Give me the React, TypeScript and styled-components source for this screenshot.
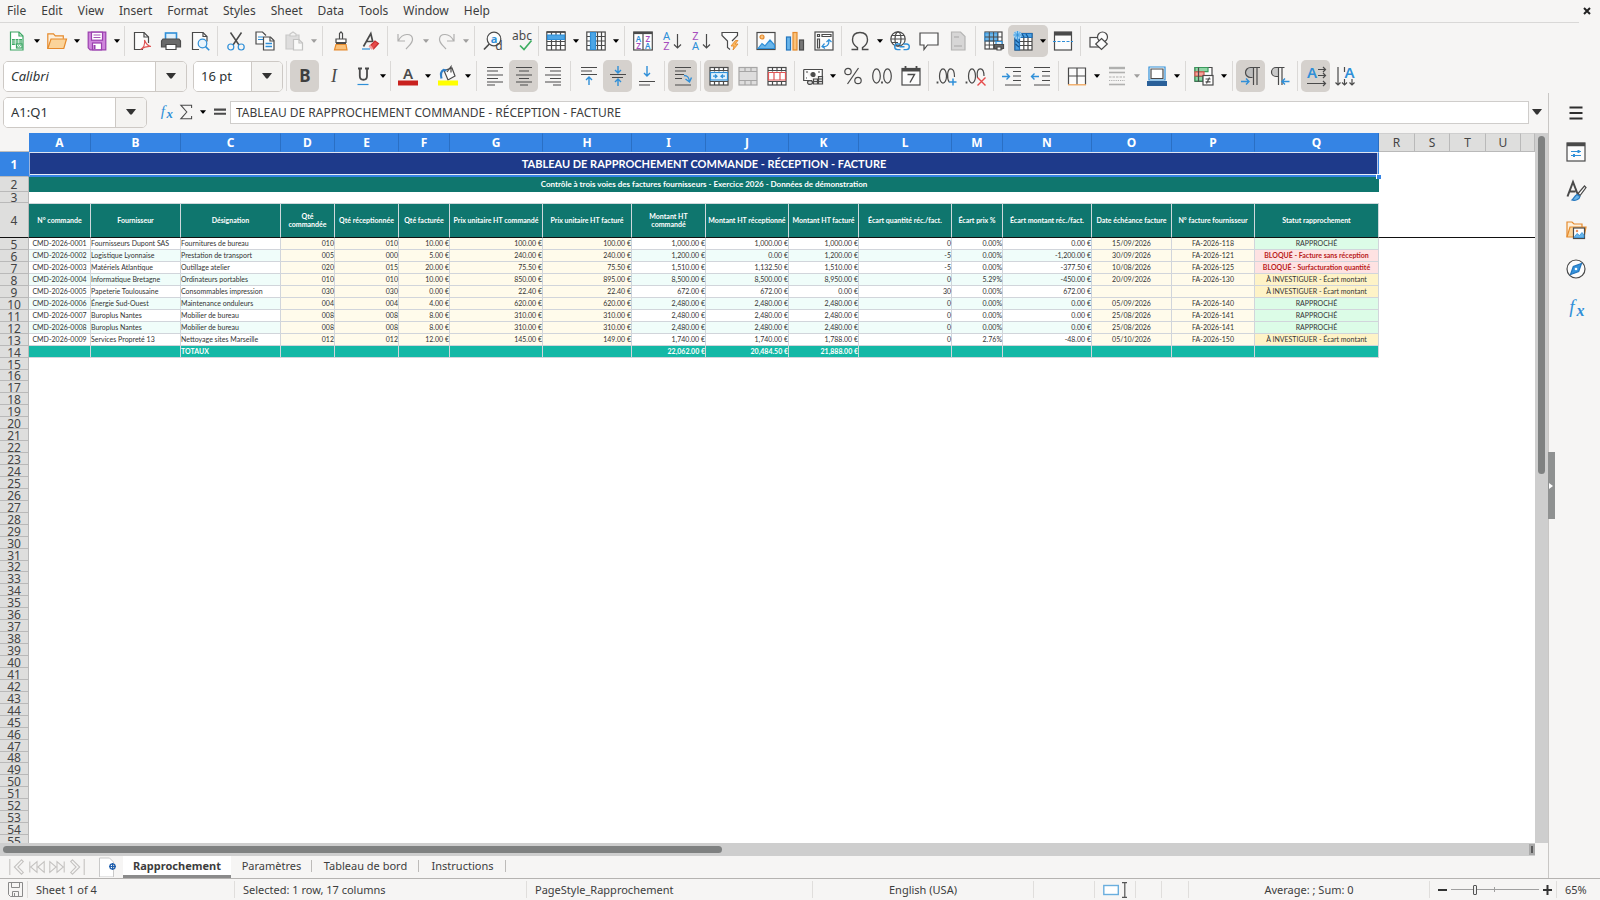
import React from "react";
import styled, { createGlobalStyle, css } from "styled-components";

const UI = `"Noto Sans", "Open Sans", sans-serif`;
const CELL = `Lato, "Open Sans", sans-serif`;
const INK = "#4a4a4a";
const BLUE = "#2f8fd8";

const GlobalStyle = createGlobalStyle`
  *, *::before, *::after { box-sizing: border-box; }
  html, body, #root { height: 100%; }
  body { margin: 0; background: #f6f5f4; color: #3d3d3d; font-family: ${UI}; font-size: 13px; overflow: hidden; }
  button, input { font: inherit; color: inherit; }
  button { border: 0; background: none; padding: 0; margin: 0; }
`;

/* ---------- shell ---------- */
const Shell = styled.div`
  display: flex;
  flex-direction: column;
  height: 100%;
`;
const MenuBar = styled.nav`
  display: flex;
  align-items: center;
  height: 23px;
  flex: none;
  padding: 0 0 0 7px;
  gap: 15px;
  font-size: 12px;
  margin-right: 21px;
  border-bottom: 1px solid #d9d8d7;
`;
const MenuItem = styled.button`
  line-height: 20px;
`;
const CloseButton = styled.button`
  margin: 0 -12px 0 auto;
  display: flex;
`;
const Toolbar = styled.div<{ $pad?: number; $h?: number }>`
  display: flex;
  align-items: center;
  height: ${(p) => p.$h ?? 36}px;
  flex: none;
  padding-left: ${(p) => p.$pad ?? 2}px;
`;
const Separator = styled.span<{ $tight?: boolean }>`
  width: ${(p) => (p.$tight ? 5 : 7)}px;
  height: 30px;
  flex: none;
  display: flex;
  justify-content: center;
  &::after { content: ""; width: 1px; background: #dbd9d7; }
`;
const ToolButton = styled.button<{ $active?: boolean; $off?: boolean }>`
  width: 29px;
  height: 32px;
  flex: none;
  display: flex;
  align-items: center;
  justify-content: center;
  border-radius: 5px;
  opacity: ${(p) => (p.$off ? 0.4 : 1)};
  background: ${(p) => (p.$active ? "#d5d1cd" : "transparent")};
`;
const ArrowButton = styled.button<{ $off?: boolean }>`
  width: 11px;
  height: 32px;
  flex: none;
  display: flex;
  align-items: center;
  justify-content: center;
  opacity: ${(p) => (p.$off ? 0.35 : 1)};
`;
const SplitGroup = styled.span<{ $active?: boolean }>`
  display: flex;
  border-radius: 5px;
  background: ${(p) => (p.$active ? "#d5d1cd" : "transparent")};
`;
const Combo = styled.div<{ $width: number }>`
  display: flex;
  width: ${(p) => p.$width}px;
  height: 31px;
  flex: none;
  border: 1px solid #cdc9c5;
  border-radius: 5px;
  overflow: hidden;
  background: #fff;
`;
const ComboInput = styled.input<{ $italic?: boolean }>`
  flex: 1;
  min-width: 0;
  border: 0;
  outline: 0;
  padding: 0 7px;
  color: #2e3436;
  font-style: ${(p) => (p.$italic ? "italic" : "normal")};
`;
const ComboArrow = styled.button`
  width: 31px;
  display: flex;
  align-items: center;
  justify-content: center;
  border-left: 1px solid #cdc9c5;
  background: #f4f3f1;
`;
const ComboGap = styled.span`
  width: 6px;
  flex: none;
`;

/* ---------- body ---------- */
const Body = styled.div`
  display: flex;
  flex: 1;
  min-height: 0;
`;
const Main = styled.main`
  flex: 1;
  min-width: 0;
  display: flex;
  flex-direction: column;
`;
const FormulaBar = styled.div`
  display: flex;
  align-items: center;
  height: 38px;
  flex: none;
  padding: 0 6px 0 3px;
  margin-bottom: 2px;
`;
const FormulaTools = styled.div`
  display: flex;
  align-items: center;
  padding-left: 9px;
`;
const FormulaButton = styled.button<{ $w: number }>`
  width: ${(p) => p.$w}px;
  height: 24px;
  display: flex;
  align-items: center;
  justify-content: center;
`;
const FormulaInput = styled.input`
  flex: 1;
  min-width: 0;
  height: 23px;
  padding: 0 5px;
  margin: 0 3px 0 1px;
  border: 1px solid #cfcdcb;
  outline: 0;
  background: #fff;
  font-size: 12px;
`;
const SheetArea = styled.div`
  display: flex;
  flex: 1;
  min-height: 0;
`;
const SheetViewport = styled.div`
  flex: 1;
  min-width: 0;
  overflow: hidden;
  background: #fff;
`;
const VScroll = styled.div`
  width: 13px;
  flex: none;
  background: #cecece;
  padding: 3px;
`;
const VThumb = styled.div`
  height: 48%;
  border-radius: 4px;
  background: #7f8181;
`;
const HScroll = styled.div`
  height: 13px;
  flex: none;
  margin-right: 13px;
  background: #cecece;
  padding: 3px 2px 3px 3px;
  display: flex;
  justify-content: space-between;
`;
const HThumb = styled.div`
  width: 47%;
  border-radius: 4px;
  background: #7f8181;
`;
const HGrip = styled.div`
  width: 2px;
  background: #5c5c5c;
  box-shadow: 0 0 0 2px #a9a9a9;
`;

/* ---------- sheet table ---------- */
const Sheet = styled.table`
  width: 100%;
  table-layout: fixed;
  border-collapse: separate;
  border-spacing: 0;
  font-family: ${CELL};
  font-size: 7px;
  color: #333;
`;
const Corner = styled.td`
  padding: 0;
  background: #f6f5f4;
  border-bottom: 1px solid #bdbdbd;
`;
const ColHead = styled.th<{ $sel: boolean }>`
  height: 19px;
  padding: 0;
  font: ${(p) => (p.$sel ? 700 : 400)} 12px/16px ${UI};
  color: ${(p) => (p.$sel ? "#fff" : "#444")};
  background: ${(p) => (p.$sel ? "#3584e4" : "#dededd")};
  border-right: 1px solid ${(p) => (p.$sel ? "#2a6fc4" : "#b9b9b9")};
  border-bottom: 1px solid ${(p) => (p.$sel ? "#3584e4" : "#b9b9b9")};
  border-top: 1px solid ${(p) => (p.$sel ? "#3584e4" : "#cfcfcf")};
`;
const RowHead = styled.th<{ $sel?: boolean; $h: number; $line?: boolean }>`
  height: ${(p) => p.$h}px;
  padding: ${(p) => (p.$h < 20 ? "1px" : 0)} 0 0;
  overflow: hidden;
  font: ${(p) => (p.$sel ? 700 : 400)} 12px/9px ${UI};
  color: ${(p) => (p.$sel ? "#fff" : "#444")};
  background: ${(p) => (p.$sel ? "#3584e4" : "#dededd")};
  border-right: 1px solid ${(p) => (p.$sel ? "#3584e4" : "#b9b9b9")};
  border-bottom: 1px solid ${(p) => (p.$line ? "#111" : "#b9b9b9")};
`;
const band = css`
  padding: 0;
  text-align: center;
  font-weight: 700;
  color: #fff;
`;
const TitleCell = styled.td`
  ${band}
  background: #1e3a8a;
  font-size: 11px;
  line-height: 16px;
  border: 1px solid #3584e4;
  border-top-color: #dfe5f2;
  border-left-color: #9db4dc;
  border-bottom: 2px solid #3584e4;
  box-shadow: inset 0 -1px #e9eef8, inset -1px 0 #b8c5e4;
  position: relative;
`;
const FillHandle = styled.span`
  position: absolute;
  right: -3px;
  bottom: -4px;
  width: 5px;
  height: 5px;
  background: #3584e4;
  border: solid #fff;
  border-width: 1px 0 0 1px;
`;
const SubtitleCell = styled.td`
  ${band}
  padding-bottom: 2px;
  background: #0f766e;
  font-size: 8px;
  line-height: 10px;
`;
const HeadCell = styled.th`
  ${band}
  padding-bottom: 2px;
  white-space: nowrap;
  background: #0f766e;
  line-height: 8px;
  border-right: 1px solid #cfd8dc;
  border-top: 1px solid #cfd8dc;
  border-bottom: 1px solid #111;
`;
const FreezeCell = styled.td`
  padding: 0;
  border-bottom: 1px solid #111;
`;
const BlankCell = styled.td`
  padding: 0;
`;
const DataCell = styled.td<{ $bg: string; $align: string }>`
  padding: 0 0 1px;
  white-space: nowrap;
  line-height: 9px;
  text-align: ${(p) => p.$align};
  background: ${(p) => p.$bg};
  border-right: 1px solid #d1d5db;
  border-bottom: 1px solid #d1d5db;
`;
const StatusCell = styled(DataCell)<{ $blocked: boolean }>`
  ${(p) => p.$blocked && css`
    font-weight: 700;
    color: #b91c1c;
  `}
`;
const TotalCell = styled(DataCell)`
  font-weight: 700;
  color: #fff;
`;

/* ---------- side bar ---------- */
const SideBar = styled.aside`
  position: relative;
  width: 52px;
  flex: none;
  border-left: 1px solid #c9c7c5;
  display: flex;
  flex-direction: column;
  align-items: center;
  padding-left: 2px;
`;
const SideButton = styled.button`
  width: 36px;
  height: 39px;
  display: flex;
  align-items: center;
  justify-content: center;
`;
const SideHandle = styled.button`
  position: absolute;
  left: -1px;
  top: 359px;
  width: 7px;
  height: 67px;
  background: #8f9191;
  display: flex;
  align-items: center;
`;

/* ---------- tabs and status ---------- */
const TabBar = styled.div`
  display: flex;
  flex: none;
  height: 22px;
`;
const TabNav = styled.div`
  display: flex;
  align-items: center;
  padding-left: 7px;
  width: 90px;
`;
const NavButton = styled.button`
  width: 20px;
  height: 20px;
  display: flex;
  align-items: center;
  justify-content: center;
`;
const AddButton = styled.button`
  width: 33px;
  display: flex;
  align-items: center;
  padding-left: 9px;
`;
const Tab = styled.button<{ $active?: boolean; $w: number }>`
  width: ${(p) => p.$w}px;
  position: relative;
  font-size: 11px;
  font-weight: ${(p) => (p.$active ? 700 : 400)};
  background: ${(p) => (p.$active ? "#fff" : "transparent")};
  border-bottom: 3px solid ${(p) => (p.$active ? "#8b8b8b" : "transparent")};
  &::after {
    content: "";
    position: absolute;
    right: 0;
    top: 4px;
    height: 12px;
    width: ${(p) => (p.$active ? 0 : 1)}px;
    background: #bdbbb9;
  }
`;
const StatusBar = styled.footer`
  display: flex;
  flex: none;
  height: 22px;
  border-top: 1px solid #b5b3b1;
  font-size: 11px;
`;
const StatusField = styled.div<{ $w?: number; $center?: boolean; $grow?: number }>`
  ${(p) => (p.$grow ? css`flex: ${p.$grow} 1 0;` : css`width: ${p.$w}px; flex: none;`)}
  display: flex;
  align-items: center;
  gap: 4px;
  justify-content: ${(p) => (p.$center ? "center" : "flex-start")};
  padding-left: ${(p) => (p.$center ? 0 : 8)}px;
  border-right: 1px solid #e0dedc;
  &:last-child { border-right: 0; }
  margin: 2px 0;
  white-space: nowrap;
`;
const ZoomButton = styled.button`
  display: flex;
`;
const ZoomRange = styled.input`
  appearance: none;
  width: 88px;
  height: 14px;
  margin: 0;
  background: linear-gradient(#a0a0a0, #a0a0a0) center / 100% 1px no-repeat,
    linear-gradient(#a0a0a0, #a0a0a0) 43px center / 1px 5px no-repeat;
  &::-webkit-slider-thumb {
    appearance: none;
    width: 4px;
    height: 10px;
    border: 1px solid #555;
    border-radius: 1px;
    background: #eee;
  }
`;

/* ---------- icons ---------- */
const Drawing = styled.svg`
  display: block;
  overflow: visible;
`;
type SvgProps = { children: React.ReactNode; size?: number };
const Svg = ({ children, size = 20 }: SvgProps) => (
  <Drawing width={size} height={size} viewBox="0 0 20 20" fill="none" stroke={INK} strokeWidth="1.2" aria-hidden="true">
    {children}
  </Drawing>
);
const Caret = ({ big }: { big?: boolean }) => (
  <svg width={big ? 10 : 6} height={big ? 6 : 4} viewBox="0 0 10 6" aria-hidden="true">
    <path d="M0 0h10L5.800 5.600h-1.600z" fill={big ? "#333" : "#000"} />
  </svg>
);
const T = (p: { x: number; y: number; s: number; c?: string; w?: number; st?: string; f?: string; children: string }) => (
  <text x={p.x} y={p.y} fontSize={p.s} fill={p.c ?? INK} stroke="none" fontWeight={p.w ?? 400} fontStyle={p.st ?? "normal"} fontFamily={p.f ?? UI} textAnchor="middle">
    {p.children}
  </text>
);

const icons: Record<string, React.ReactNode> = {
  new: <><path d="M3.500 1h8.500l4 4v14h-12.500z" fill="#fff" stroke="#3ba663" /><path d="M12 1v4h4" stroke="#3ba663" /><path d="M5 8h10v6h-10z" fill="#3ba663" stroke="none" /><path d="M5 10h10M5 12h10M8.300 8v6M11.700 8v6" stroke="#fff" strokeWidth=".7" /><rect x="9.500" y="13" width="5.500" height="4" fill="#fff" stroke="#3ba663" /><path d="M10 16.500l1.500-2 1.200 1 1.500-1.500" stroke="#3ba663" strokeWidth=".8" /></>,
  open: <><path d="M.8 17.500V2.800h5.700l1.800 2h8v3" stroke="#e58a2c" fill="#fdf0dc" /><path d="M.8 17.500L4 8h15.500l-2.700 9.500z" fill="#fbd49a" stroke="#e58a2c" /></>,
  save: <><path d="M1.200 1.200h17.600v17.600H3.200l-2-2z" fill="#cf86dc" stroke="#9a3fae" /><rect x="4.500" y="1.200" width="11" height="8" fill="#fff" stroke="#9a3fae" /><path d="M6.500 4h7M6.500 6.500h7" stroke="#9a3fae" strokeWidth=".9" /><rect x="5.500" y="12" width="9" height="6.800" fill="#fff" stroke="#9a3fae" /><path d="M7.500 14v4" stroke="#9a3fae" strokeWidth="2" /></>,
  pdf: <><path d="M11 18.500H2.500V1.500h9.500l4.500 4.500v6" fill="#fcfcfc" /><path d="M12 1.500v4.500h4.500" /><path d="M8.500 18.500c3-1.500 4.500-5.500 4-9.500 1.500 4 3 6 6.500 6.500-4-.5-7 .5-10.500 3z" stroke="#e05555" strokeWidth="1.100" /></>,
  print: <><rect x="4.500" y="2" width="11" height="8" fill="#dff0fb" stroke={BLUE} strokeWidth="1.600" /><path d="M2 8h16l1.500 2v6h-19v-6z" fill="#6a6a6a" stroke="#4d4d4d" /><path d="M5 13.500h10v5H5z" fill="#fff" /></>,
  preview: <><path d="M9 18.500H2.500V1.500h10.500l4 4v5" fill="#fcfcfc" /><path d="M13 1.500v4h4" /><circle cx="12.500" cy="12.500" r="4.300" fill="#e8f4fc" stroke={BLUE} /><path d="M15.600 15.600l3.600 3.600" stroke={BLUE} strokeWidth="1.600" /></>,
  cut: <><path d="M4.500 1.500l8.500 12.500M15.500 1.500L7 14" strokeWidth="1.500" /><circle cx="4.800" cy="16" r="3" stroke={BLUE} /><circle cx="15.200" cy="16" r="3" stroke={BLUE} /></>,
  copy: <><path d="M9 13H1V1h6.500l3.500 3.500" fill="#fcfcfc" /><path d="M3 6h5M3 8.500h5" stroke={BLUE} /><path d="M8.500 6h7L19 9.500V19H8.500z" fill="#fcfcfc" /><path d="M15 6v4h4" /><path d="M10.500 12.500h6.500M10.500 15.500h6.500" stroke={BLUE} strokeWidth="1.600" /></>,
  paste: <><path d="M2 4h13v14H2z" fill="#bbb" stroke="#888" /><path d="M6 5V3l3-2 3 2v2z" fill="#eee" stroke="#888" /><path d="M9.500 8.500h5.500l3.500 3.500v7H9.500z" fill="#fff" stroke="#777" /><path d="M15 8.500V12h3.500" stroke="#777" /></>,
  clone: <><path d="M8.500 8V2.500L10 .8l1.500 1.700V8M5 12V8h10v4" fill="#fff" /><path d="M5 12h10" strokeWidth="2" /><path d="M5 13.500l-1.500 5.300h12.500l-1-5.300z" fill="#fbc27b" stroke="#e58a2c" /></>,
  clear: <><path d="M3.500 15.500L10.800 2.500l2 8.500M6.500 10.500h6" strokeWidth="1.700" /><path d="M2 18h8" stroke={BLUE} /><path d="M10 15l5-5 3.500 2.500-5 5.500z" fill="#e64a4a" stroke="#c92f2f" /><path d="M8.500 15.500l2-1.500 3 3.500-2 1.300z" fill="#f6a0a0" stroke="none" /></>,
  undo: <path d="M2 3v7h7M2.500 9.500c4-8 13.500-7.500 14-1.500.3 4-3 6-6.500 10" />,
  redo: <path d="M18 3v7h-7M17.500 9.500C13.500 1.500 4 2 3.500 8c-.3 4 3 6 6.500 10" />,
  find: <><circle cx="11" cy="8" r="6.800" fill="#fcfcfc" /><path d="M6.300 13L1 18.500" strokeWidth="1.700" /><T x={11} y={12} s={11} c={BLUE} w={700}>a</T><T x={16} y={19} s={12}>d</T></>,
  spell: <><T x={10} y={9} s={12}>abc</T><path d="M8 14.500l4 4 7.500-9" stroke="#3fae62" strokeWidth="1.700" /></>,
  row: <><rect x=".8" y="1" width="18.400" height="18" fill="#fff" /><path d="M1 10.500h18M1 14.500h18M5.500 1v18M10 1v18M14.500 1v18" /><path d="M1.500 4h17v4.500H1.500z" fill="#4da6e6" stroke={BLUE} /><path d="M.8 1h18.400" strokeWidth="1.600" /></>,
  col: <><rect x=".8" y="1" width="18.400" height="18" fill="#fff" /><path d="M1 5.500h18M1 10h18M1 14.500h18M11.500 1v18M15.500 1v18" /><path d="M4.500 1.500h5v17h-5z" fill="#4da6e6" stroke={BLUE} /></>,
  sort: <><rect x=".7" y="1" width="18.600" height="18" fill="#fff" /><path d="M1 2h18" strokeWidth="2.200" /><path d="M10 2v17" /><T x={5.5} y={11} s={8} c={BLUE} w={600}>A</T><T x={14.7} y={11} s={8} c="#a64dbd" w={600}>Z</T><T x={5.5} y={18} s={8} c="#a64dbd" w={600}>Z</T><T x={14.7} y={18} s={8} c={BLUE} w={600}>A</T></>,
  asc: <><T x={4.5} y={9} s={11} c={BLUE}>A</T><T x={4.5} y={19} s={11} c="#a64dbd">Z</T><path d="M15.500 3v14M12 13.500l3.500 3.500 3.500-3.500" /></>,
  desc: <><T x={4.5} y={9} s={11} c="#a64dbd">Z</T><T x={4.5} y={19} s={11} c={BLUE}>A</T><path d="M15.500 3v14M12 13.500l3.500 3.500 3.500-3.500" /></>,
  filter: <><path d="M10 18.500l-2.500-2V10L2 4.500V1.500h15.500v3L12 10" fill="#fcfcfc" /><path d="M15.500 9.500L11 15h3l-1 4 5-6h-3l3-3.500z" fill="#fbb860" stroke="#e58a2c" strokeWidth=".9" /></>,
  image: <><rect x="1" y="1.500" width="18" height="17" fill="#fcfcfc" /><circle cx="6" cy="6" r="2" fill="#fbc27b" stroke="#e58a2c" /><path d="M2 17.500l4-5 3 2.500 5-6 4.500 5v3.500z" fill="#69b5ea" stroke={BLUE} /></>,
  chart: <><rect x="1.500" y="6" width="4" height="13" fill="#69b5ea" stroke="#2476bd" /><rect x="8" y="1.500" width="4" height="17.500" fill="#fbc27b" stroke="#e58a2c" /><rect x="14.500" y="9" width="4" height="10" fill="#777" /></>,
  pivot: <><rect x="1" y="1" width="18" height="18" fill="#fcfcfc" /><path d="M3.500 3.500h2v2h-2zM8 3.500h9v2H8zM3.500 8h2v9h-2z" /><path d="M9 15.500c4 .5 6-1.500 6-6M12.500 11l2.500-2.500L17.500 11M10.500 12.500l-2.500 3 3 2" stroke={BLUE} /></>,
  omega: <path d="M1.500 18.500h6v-1.800C4 14.500 2.500 12 2.500 8.800 2.500 4 5.700 1.500 10 1.500s7.500 2.500 7.500 7.300c0 3.200-1.500 5.700-5 7.900v1.800h6" strokeWidth="1.400" />,
  link: <><circle cx="8" cy="8" r="7.200" fill="#fcfcfc" /><ellipse cx="8" cy="8" rx="3" ry="7.200" /><path d="M1 8h14M2 4.500h12M2 11.500h6" /><path d="M10.500 13h-3a2.800 2.800 0 0 0 0 5.600h3M13.500 13h3a2.800 2.800 0 0 1 0 5.600h-3M9.500 15.800h5" stroke={BLUE} strokeWidth="1.400" /></>,
  comment: <path d="M1 2h18v12H8.500L5 18.500V14H1z" fill="#fcfcfc" />,
  headers: <><path d="M3.500 1h9l4.500 4.500V19H3.500z" fill="#aaa" stroke="#555" /><path d="M6 6h5M6 15h8" stroke="#333" /></>,
  printRange: <><rect x="1" y="1" width="17" height="17" fill="#fff" /><path d="M1 2h12.500v8H1z" fill="#69b5ea" stroke={BLUE} /><path d="M1 6h17M1 10h17M1 14h12M5.300 1v17M9.600 1v17M13.900 1v10" strokeWidth="1" /><path d="M12 10.500h6V14h-6z" fill="#e3f2fc" stroke={BLUE} /><path d="M10.500 13.500h9v4h-9z" fill="#666" /><path d="M13 16h4v3h-4z" fill="#fff" /></>,
  freeze: <><rect x="2" y="2.500" width="17" height="16.500" fill="#fff" /><path d="M2 2.500h17v4H6.500V19H2z" fill="#4a9fe0" stroke="#1e6fb8" /><path d="M7 10.500h12M7 14.500h12M10.800 6.500V19M15 6.500V19" /><path d="M2.500 9l3.500 3M2.500 13l3.500 3M9 3l2 3M13 3l2 3" stroke="#12508c" /><circle cx="4.500" cy="4" r="4" fill="#9bd0f5" stroke="none" /><path d="M4.500 0v8M.5 4h8M1.700 1.200l5.600 5.600M7.300 1.200L1.700 6.800" stroke={BLUE} strokeWidth=".8" /></>,
  split: <><rect x="1.500" y="1" width="17" height="18" fill="#fcfcfc" /><path d="M1.500 2.800h17" strokeWidth="3.500" /><path d="M0 10.500h20" stroke={BLUE} strokeDasharray="3 1.500" /></>,
  shapes: <><rect x="1" y="6.500" width="10" height="9.500" fill="#fcfcfc" /><circle cx="13.500" cy="6" r="5" fill="#fcfcfc" /><path d="M12.500 7.500l5.800 5.500-5.800 5.500L6.700 13z" fill="#fcfcfc" /></>,
  bold: <T x={10} y={16} s={17} w={700} c="#3f3f3f">B</T>,
  italic: <T x={10} y={16} s={18} st="italic" f='"Liberation Serif", serif'>I</T>,
  underline: <><path d="M5 2.500h4M12 2.500h4M6.800 2.500V10c0 5 7.200 5 7.200 0V2.500" strokeWidth="1.800" /><path d="M4.500 18.500h11" stroke={BLUE} /></>,
  fontColor: <><T x={10} y={12.5} s={15} w={600}>A</T><path d="M0 14.500h20v5H0z" fill="#c9211e" stroke="none" /></>,
  highlight: <><path d="M6 4.500l8-2.500 3 8-7 4z" fill="#fcfcfc" /><path d="M9 6l4-5.500v6" /><path d="M3.500 12.500c-1-4 0-7.500 2-8.500l3 .5" stroke="#2f7fc8" strokeWidth="2.200" /><path d="M0 14.500h20v5H0z" fill="#ff0" stroke="none" /></>,
  left: <path d="M2 1.500h16M2 5h11M2 9h16M2 12.500h11M2 16h16M2 19h8" />,
  center: <path d="M2 1.500h16M5 5h10M2 9h16M5 12.500h10M2 16h16M6 19h8" />,
  right: <path d="M2 1.500h16M7 5h11M2 9h16M7 12.500h11M2 16h16M10 19h8" />,
  top: <><path d="M2 1.500h16M2 5h11M2 8.500h16" /><path d="M10 19v-8M7 14l3-3 3 3" stroke={BLUE} strokeWidth="1.400" /></>,
  middle: <><path d="M2 8.500h16M4 11.500h11" /><path d="M10 0v6.500M7 4l3 3 3-3M10 20v-6.500M7 16l3-3 3 3" stroke={BLUE} strokeWidth="1.400" /></>,
  bottom: <><path d="M2 15.500h16M2 19h11" /><path d="M10 0v9.500M7 7l3 3 3-3" stroke={BLUE} strokeWidth="1.400" /></>,
  wrap: <><path d="M2 1.500h16M2 5h11M2 8.500h9M2 12.500h7M2 19h16" /><path d="M11 9.500c4 0 5 2 5.500 6M12.500 13l4 3 2-4.500" stroke={BLUE} strokeWidth="1.400" /></>,
  merge: <><rect x="1" y="1.500" width="18" height="17.500" fill="#fff" /><path d="M1 4.500h18M1 15.500h18M5.500 1.500v4M10 1.500v4M14.500 1.500v4M5.500 15.500V19M10 15.500V19M14.500 15.500V19" /><rect x="1.500" y="6.500" width="17" height="7.500" fill="#e3f2fc" stroke={BLUE} /><path d="M4 10.200h4M12 10.200h4M6 8.500l2 1.700L6 12M14 8.500l-2 1.700 2 1.800" stroke={BLUE} /></>,
  mergeOff: <><rect x="1" y="1.500" width="18" height="17.500" fill="#bbb" stroke="#333" /><path d="M1 5.500h18M1 14.500h18M7 1.500v4M13 1.500v4M7 14.500V19M13 14.500V19" stroke="#333" /></>,
  splitCells: <><rect x="1" y="1.500" width="18" height="17.500" fill="#fff" /><path d="M1 4.500h18M1 15.500h18M5.500 1.500v4M10 1.500v4M14.500 1.500v4M5.500 15.500V19M10 15.500V19M14.500 15.500V19" /><path d="M1.500 6.500h17V14h-17zM7 6.500V14M13 6.500V14" fill="#fff" stroke="#e05555" /></>,
  currency: <><path d="M.7 3.500h18.600v8M.7 3.500v11H9" fill="#fff" /><circle cx="10" cy="8.500" r="2" fill={INK} /><path d="M3 6h2M15 6h2M3 12h1" /><path d="M4.500 16.500c0-2.500 5-2.500 5 0s-5 2.500-5 0zM10.500 13h4v5h-4zM15.500 10.500h4V18h-4zM10.500 15.500h4M15.500 13h4M15.500 15.500h4" fill="#ddd" /></>,
  percent: <><circle cx="5" cy="5.500" r="3.200" /><circle cx="15" cy="14.500" r="3.200" /><path d="M15.500 2L4.500 18" /></>,
  number: <><ellipse cx="4.500" cy="10" rx="3.800" ry="7.200" /><ellipse cx="15.500" cy="10" rx="3.800" ry="7.200" /><path d="M10 15.500v2" strokeWidth="1.800" /></>,
  date: <><rect x="1" y="2.500" width="18" height="16.500" fill="#fcfcfc" /><path d="M1 4h18" strokeWidth="3" /><path d="M4.500 0v4M15.500 0v4" strokeWidth="1.800" /><path d="M6.500 8.500h7L9 16.500" strokeWidth="1.400" /></>,
  decPlus: <><path d="M.5 15.500v2" strokeWidth="1.800" /><ellipse cx="6" cy="10" rx="3.500" ry="7.200" /><path d="M12.500 16.500c-3-4-2.500-14 1.500-13.700 2.500.2 3.500 3.200 3.500 8.200" /><path d="M16 12.500v7M12.500 16h7" stroke={BLUE} strokeWidth="1.500" /></>,
  decMinus: <><path d="M.5 15.500v2" strokeWidth="1.800" /><ellipse cx="6" cy="10" rx="3.500" ry="7.200" /><path d="M11.500 12c-1-5 0-9.500 3-9.200 2.500.2 3.500 3.200 3.500 7.200" /><path d="M11.500 11.500l8 8M19.500 11.500l-8 8" stroke="#e64a4a" strokeWidth="1.400" /></>,
  indent: <><path d="M3 1.500h16M11 5.500h8M11 10h8M11 14.500h8M3 19h16" /><path d="M0 10.500h7.500M4.500 7.500l3 3-3 3" stroke={BLUE} strokeWidth="1.400" /></>,
  outdent: <><path d="M3 1.500h16M11 5.500h8M11 10h8M11 14.500h8M3 19h16" /><path d="M.5 10.500H8M3.500 7.500l-3 3 3 3" stroke={BLUE} strokeWidth="1.400" /></>,
  borders: <><path d="M1.500 18.500V2h17v16.500M10 2v16.500M1.500 10h17" fill="#fcfcfc" /><path d="M1 18.800h18" stroke="#f0a050" /></>,
  lineStyle: <><path d="M2 2h16" strokeWidth="2.400" /><path d="M2 6.500h16" strokeWidth="1.600" /><path d="M2 11h16" strokeDasharray="2.500 1" /><path d="M2 14.500h16" strokeDasharray="1.200 1" /><path d="M2 18.500h16" strokeWidth="1.600" /></>,
  lineColor: <><path d="M2 1h16v13H2z" fill="#fff" stroke={BLUE} /><path d="M4 3h12v9.500H4z" /><path d="M0 15h20v5H0z" fill="#2a6099" stroke="none" /></>,
  cond: <><path d="M1 1.500h17v14H1z" fill="#fff" /><path d="M1 1.500h13v4.200H1zM1 10.500h8v4.500H1z" fill="#8fd6a6" stroke="#3a9a5c" /><path d="M1 5.800h9v4.200H1z" fill="#f5a49c" stroke="#d65a50" /><path d="M4.500 1.500v14" /><rect x="9" y="9.500" width="10" height="9.500" fill="#fff" /><path d="M11.500 13h5M11.500 15.800h5M15.500 11.500l-3 6" /></>,
  ltr: <><path d="M9 2a4.500 4.500 0 0 0 0 9h3V2z" fill="#bdbdbd" stroke="none" /><path d="M19 1.500H9.500a5 5 0 0 0 0 10h2M12.500 1.500V19M16 1.500V19" /><path d="M0 15.500h8M5 12.500l3 3-3 3" stroke={BLUE} strokeWidth="1.400" /></>,
  rtl: <><path d="M5.500 2a4 4 0 0 0 0 8.500h3V2z" fill="#c9c9c9" stroke="none" /><path d="M14.500 1.500H6a4.500 4.500 0 0 0 0 9h2M8.500 1.500V19M12 1.500V19" /><path d="M19.500 15.500H12M15 12.500l-3 3 3 3" stroke={BLUE} strokeWidth="1.400" /></>,
  textLr: <><T x={6} y={12} s={15} c={BLUE} w={600}>A</T><path d="M12 3.500h7M12 9.500h7M1 17.500h18M17 1l2.500 2.500L17 6M17 7l2.500 2.500L17 12M17 15l2.500 2.500L17 20" /></>,
  textTb: <><T x={14.5} y={12} s={15} c={BLUE} w={600}>A</T><path d="M3 1v18M9.500 1v5M9.500 13v6M17 13v6M.5 16.500L3 19l2.500-2.500M7 16.500L9.500 19l2.500-2.500M14.500 16.500L17 19l2.500-2.500" /></>,
  fx: <><T x={6} y={15} s={19} c={BLUE} st="italic" f='"Liberation Serif", serif'>f</T><T x={14.5} y={18} s={16} c={BLUE} st="italic" w={700} f='"Liberation Serif", serif'>x</T></>,
  sigma: <path d="M17 5V1.500H3.500L11 10l-7.500 8.500H17V15" strokeWidth="1.300" />,
  equals: <path d="M0 6h20M0 13h20" strokeWidth="3.500" />,
  menu: <path d="M3.500 4.500h13M3.500 10h13M3.500 15.500h13" stroke="#2e2e2e" strokeWidth="2" />,
  props: <><rect x="1" y="1" width="18" height="18" fill="#fcfcfc" /><path d="M1 2.500h18" strokeWidth="3.500" /><path d="M5 9.500h10M5 13.500h10" stroke={BLUE} /><path d="M12.500 8v3M8 12v3" stroke={BLUE} strokeWidth="2" /></>,
  styles: <><path d="M1.500 15.500L7 1l5 13M3.500 10.500h6" strokeWidth="2" /><path d="M18.500 5L12 12.500l2 2L20 6.500z" fill="#fff" /><path d="M6 19c1.500-1 2.500-4 5-5.500l3 2c-.5 3-5 4.500-8 3.500z" fill="#69b5ea" stroke="#2476bd" /></>,
  gallery: <><path d="M1 17V2h5l2 2h8v3" fill="#fdf0dc" stroke="#e58a2c" /><path d="M1 17L4 7h16l-2 10z" fill="#fbd49a" stroke="#e58a2c" /><rect x="7.500" y="8" width="11" height="10.500" fill="#fff" /><path d="M8 17.500l3-4 2.500 2 2.500-3 2 2.500v2.500z" fill="#69b5ea" stroke={BLUE} strokeWidth=".8" /><circle cx="11" cy="11" r=".9" fill="#e66" stroke="#e58a2c" strokeWidth=".6" /></>,
  nav: <><circle cx="10" cy="10" r="9" fill="#fcfcfc" /><path d="M15.500 4.500l-2.800 8-8.200 3 2.800-8z" fill="#3593dc" stroke="#2476bd" /><circle cx="10" cy="10" r="1.300" fill="#fff" stroke="none" /></>,
};

type Tool = { id: string; label: string; arrow?: boolean; active?: boolean; off?: boolean };
type Item = Tool | "|" | "!";
const t = (id: string, label: string, opt: Partial<Tool> = {}): Tool => ({ id, label, ...opt });
const A = { arrow: true };
const ON = { active: true };

const standardTools: Item[] = [
  t("new", "New", A), t("open", "Open", A), t("save", "Save", A), "!",
  t("pdf", "Export as PDF"), t("print", "Print"), t("preview", "Print preview"), "|",
  t("cut", "Cut"), t("copy", "Copy"), t("paste", "Paste", { arrow: true, off: true }), "|",
  t("clone", "Clone formatting"), t("clear", "Clear formatting"), "|",
  t("undo", "Undo", { arrow: true, off: true }), t("redo", "Redo", { arrow: true, off: true }), "|",
  t("find", "Find and replace"), t("spell", "Spelling"), "!",
  t("row", "Row", A), t("col", "Column", A), "|",
  t("sort", "Sort"), t("asc", "Sort ascending"), t("desc", "Sort descending"), t("filter", "AutoFilter"), "|",
  t("image", "Insert image"), t("chart", "Insert chart"), t("pivot", "Pivot table"), "|",
  t("omega", "Special character", A), t("link", "Hyperlink"), t("comment", "Comment"), t("headers", "Headers and footers", { off: true }), "|",
  t("printRange", "Define print area"), t("freeze", "Freeze rows and columns", { arrow: true, active: true }), t("split", "Split window"), "|",
  t("shapes", "Show draw functions"),
];
const formatTools: Item[] = [
  "|", t("bold", "Bold", ON), t("italic", "Italic"), t("underline", "Underline", A), "!",
  t("fontColor", "Font color", A), t("highlight", "Background color", A), "|",
  t("left", "Align left"), t("center", "Center", ON), t("right", "Align right"), "|",
  t("top", "Align top"), t("middle", "Center vertically", ON), t("bottom", "Align bottom"), "|",
  t("wrap", "Wrap text", ON), "|",
  t("merge", "Merge and center", ON), t("mergeOff", "Merge cells", { off: true }), t("splitCells", "Unmerge cells"), "|",
  t("currency", "Currency", A), t("percent", "Percent"), t("number", "Number"), t("date", "Date"), "|",
  t("decPlus", "Add decimal place"), t("decMinus", "Delete decimal place"), "|",
  t("indent", "Increase indent"), t("outdent", "Decrease indent"), "|",
  t("borders", "Borders", A), t("lineStyle", "Border style", { arrow: true, off: true }), t("lineColor", "Border color", A), "|",
  t("cond", "Conditional formatting", A), "|",
  t("ltr", "Left-to-right", ON), t("rtl", "Right-to-left"), "|",
  t("textLr", "Text direction left to right", ON), t("textTb", "Text direction top to bottom"),
];
const Tools = ({ items }: { items: Item[] }) => (
  <>
    {items.map((it, i) => {
      if (it === "|" || it === "!") return <Separator key={i} $tight={it === "!"} />;
      if (it.arrow)
        return (
          <SplitGroup key={i} $active={it.active}>
            <ToolButton aria-label={it.label} $off={it.off}><Svg>{icons[it.id]}</Svg></ToolButton>
            <ArrowButton aria-label={`${it.label} options`} $off={it.off}><Caret /></ArrowButton>
          </SplitGroup>
        );
      return <ToolButton key={i} aria-label={it.label} $active={it.active} $off={it.off}><Svg>{icons[it.id]}</Svg></ToolButton>;
    })}
  </>
);

/* ---------- sheet data ---------- */
const columns: [string, number][] = [
  ["A", 62], ["B", 90], ["C", 100], ["D", 54], ["E", 64], ["F", 51], ["G", 93], ["H", 89], ["I", 74], ["J", 83], ["K", 70],
  ["L", 93], ["M", 51], ["N", 89], ["O", 80], ["P", 83], ["Q", 124], ["R", 36], ["S", 35], ["T", 36], ["U", 35],
];
const headings = ["N° commande", "Fournisseur", "Désignation", "Qté|commandée", "Qté réceptionnée", "Qté facturée", "Prix unitaire HT commandé", "Prix unitaire HT facturé", "Montant HT|commandé", "Montant HT réceptionné", "Montant HT facturé", "Écart quantité réc./fact.", "Écart prix %", "Écart montant réc./fact.", "Date échéance facture", "N° facture fournisseur", "Statut rapprochement"];
const OK = "RAPPROCHÉ";
const CHECK = "À INVESTIGUER - Écart montant";
const rows: string[][] = [
  ["CMD-2026-0001", "Fournisseurs Dupont SAS", "Fournitures de bureau", "010", "010", "10.00 €", "100.00 €", "100.00 €", "1,000.00 €", "1,000.00 €", "1,000.00 €", "0", "0.00%", "0.00 €", "15/09/2026", "FA-2026-118", OK],
  ["CMD-2026-0002", "Logistique Lyonnaise", "Prestation de transport", "005", "000", "5.00 €", "240.00 €", "240.00 €", "1,200.00 €", "0.00 €", "1,200.00 €", "-5", "0.00%", "-1,200.00 €", "30/09/2026", "FA-2026-121", "BLOQUÉ - Facture sans réception"],
  ["CMD-2026-0003", "Matériels Atlantique", "Outillage atelier", "020", "015", "20.00 €", "75.50 €", "75.50 €", "1,510.00 €", "1,132.50 €", "1,510.00 €", "-5", "0.00%", "-377.50 €", "10/08/2026", "FA-2026-125", "BLOQUÉ - Surfacturation quantité"],
  ["CMD-2026-0004", "Informatique Bretagne", "Ordinateurs portables", "010", "010", "10.00 €", "850.00 €", "895.00 €", "8,500.00 €", "8,500.00 €", "8,950.00 €", "0", "5.29%", "-450.00 €", "20/09/2026", "FA-2026-130", CHECK],
  ["CMD-2026-0005", "Papeterie Toulousaine", "Consommables impression", "030", "030", "0.00 €", "22.40 €", "22.40 €", "672.00 €", "672.00 €", "0.00 €", "30", "0.00%", "672.00 €", "", "", CHECK],
  ["CMD-2026-0006", "Énergie Sud-Ouest", "Maintenance onduleurs", "004", "004", "4.00 €", "620.00 €", "620.00 €", "2,480.00 €", "2,480.00 €", "2,480.00 €", "0", "0.00%", "0.00 €", "05/09/2026", "FA-2026-140", OK],
  ["CMD-2026-0007", "Buroplus Nantes", "Mobilier de bureau", "008", "008", "8.00 €", "310.00 €", "310.00 €", "2,480.00 €", "2,480.00 €", "2,480.00 €", "0", "0.00%", "0.00 €", "25/08/2026", "FA-2026-141", OK],
  ["CMD-2026-0008", "Buroplus Nantes", "Mobilier de bureau", "008", "008", "8.00 €", "310.00 €", "310.00 €", "2,480.00 €", "2,480.00 €", "2,480.00 €", "0", "0.00%", "0.00 €", "25/08/2026", "FA-2026-141", OK],
  ["CMD-2026-0009", "Services Propreté 13", "Nettoyage sites Marseille", "012", "012", "12.00 €", "145.00 €", "149.00 €", "1,740.00 €", "1,740.00 €", "1,788.00 €", "0", "2.76%", "-48.00 €", "05/10/2026", "FA-2026-150", CHECK],
];
const totals: Record<number, string> = { 2: "TOTAUX", 8: "22,062.00 €", 9: "20,484.50 €", 10: "21,888.00 €" };

const isInput = (c: number) => (c >= 3 && c <= 7) || c === 14 || c === 15;
const cellBg = (c: number, r: number) => (isInput(c) ? "#fffbeb" : r % 2 ? "#f0fdfa" : "#fff");
const alignOf = (c: number) => (c === 0 || c >= 14 ? "center" : c < 3 ? "left" : "right");
const statusBg = (s: string) => (s === OK ? "#dcfce7" : s === CHECK ? "#fef3c7" : "#fee2e2");
const plainRows = Array.from({ length: 41 }, (_, i) => i + 15);
const tail = 5;

const SheetTable = () => (
  <Sheet>
    <colgroup>
      <col width={29} />
      {columns.map(([n, w]) => <col key={n} width={w} />)}
      <col />
    </colgroup>
    <thead>
      <tr>
        <Corner />
        {columns.map(([n], i) => <ColHead key={n} scope="col" $sel={i < 17}>{n}</ColHead>)}
        <ColHead $sel={false} aria-label="V" />
      </tr>
    </thead>
    <tbody>
      <tr>
        <RowHead scope="row" $sel $h={25}>1</RowHead>
        <TitleCell colSpan={17}>TABLEAU DE RAPPROCHEMENT COMMANDE - RÉCEPTION - FACTURE<FillHandle /></TitleCell>
        <BlankCell colSpan={tail} />
      </tr>
      <tr>
        <RowHead scope="row" $h={15}>2</RowHead>
        <SubtitleCell colSpan={17}>Contrôle à trois voies des factures fournisseurs - Exercice 2026 - Données de démonstration</SubtitleCell>
        <BlankCell colSpan={tail} />
      </tr>
      <tr>
        <RowHead scope="row" $h={11}>3</RowHead>
        <BlankCell colSpan={17 + tail} />
      </tr>
      <tr>
        <RowHead scope="row" $h={35} $line>4</RowHead>
        {headings.map((h) => {
          const [a, b] = h.split("|");
          return <HeadCell key={h} scope="col">{a}{b && <br />}{b}</HeadCell>;
        })}
        <FreezeCell colSpan={tail} />
      </tr>
      {rows.map((row, r) => (
        <tr key={r}>
          <RowHead scope="row" $h={12}>{r + 5}</RowHead>
          {row.map((v, c) =>
            c === 16
              ? <StatusCell key={c} $bg={statusBg(v)} $align="center" $blocked={v.startsWith("BLOQ")}>{v}</StatusCell>
              : <DataCell key={c} $bg={cellBg(c, r)} $align={alignOf(c)}>{v}</DataCell>
          )}
          <BlankCell colSpan={tail} />
        </tr>
      ))}
      <tr>
        <RowHead scope="row" $h={12}>14</RowHead>
        {headings.map((h, c) => <TotalCell key={h} $bg="#14b8a6" $align={alignOf(c)}>{totals[c] ?? ""}</TotalCell>)}
        <BlankCell colSpan={tail} />
      </tr>
      {plainRows.map((n) => (
        <tr key={n}>
          <RowHead scope="row" $h={n % 16 === 0 ? 11 : 12}>{n}</RowHead>
          <BlankCell colSpan={17 + tail} />
        </tr>
      ))}
    </tbody>
  </Sheet>
);

const navPaths = [
  "M2 1v18M15 2L7 10l8 8 2-2-6-6 6-6z",
  "M10 4v12L3 10zM18 4v12l-7-6zM2 4v12",
  "M2 4v12l7-6zM10 4v12l7-6zM18 4v12",
  "M18 1v18M5 2l8 8-8 8-2-2 6-6-6-6z",
];
const navLabels = ["First sheet", "Previous sheet", "Next sheet", "Last sheet"];

export default function App() {
  return (
    <Shell>
      <GlobalStyle />
      <MenuBar>
        {["File", "Edit", "View", "Insert", "Format", "Styles", "Sheet", "Data", "Tools", "Window", "Help"].map((m) => (
          <MenuItem key={m}>{m}</MenuItem>
        ))}
        <CloseButton aria-label="Close document">
          <svg width="8" height="8" viewBox="0 0 8 8" aria-hidden="true"><path d="M1 1l6 6M7 1L1 7" stroke="#222" strokeWidth="2" /></svg>
        </CloseButton>
      </MenuBar>
      <Toolbar><Tools items={standardTools} /></Toolbar>
      <Toolbar $pad={3} $h={34}>
        <Combo $width={184}>
          <ComboInput aria-label="Font name" defaultValue="Calibri" $italic />
          <ComboArrow aria-label="Font list"><Caret big /></ComboArrow>
        </Combo>
        <ComboGap />
        <Combo $width={90}>
          <ComboInput aria-label="Font size" defaultValue="16 pt" />
          <ComboArrow aria-label="Size list"><Caret big /></ComboArrow>
        </Combo>
        <Tools items={formatTools} />
      </Toolbar>
      <Body>
        <Main>
          <FormulaBar>
            <Combo $width={144}>
              <ComboInput aria-label="Name box" defaultValue="A1:Q1" />
              <ComboArrow aria-label="Named ranges"><Caret big /></ComboArrow>
            </Combo>
            <FormulaTools>
              <FormulaButton $w={20} aria-label="Function wizard"><Svg size={16}>{icons.fx}</Svg></FormulaButton>
              <FormulaButton $w={20} aria-label="Select function"><Svg size={16}>{icons.sigma}</Svg></FormulaButton>
              <FormulaButton $w={14} aria-label="Function list"><Caret /></FormulaButton>
              <FormulaButton $w={19} aria-label="Formula"><Svg size={12}>{icons.equals}</Svg></FormulaButton>
            </FormulaTools>
            <FormulaInput aria-label="Input line" defaultValue="TABLEAU DE RAPPROCHEMENT COMMANDE - RÉCEPTION - FACTURE" />
            <FormulaButton $w={10} aria-label="Expand formula bar"><Caret big /></FormulaButton>
          </FormulaBar>
          <SheetArea>
            <SheetViewport><SheetTable /></SheetViewport>
            <VScroll><VThumb /></VScroll>
          </SheetArea>
          <HScroll><HThumb /><HGrip /></HScroll>
          <TabBar>
            <TabNav>
              {navPaths.map((d, i) => (
                <NavButton key={i} aria-label={navLabels[i]}>
                  <svg width="18" height="18" viewBox="0 0 20 20" fill="none" stroke="#c4c2c0" strokeWidth="1.2" aria-hidden="true"><path d={d} /></svg>
                </NavButton>
              ))}
            </TabNav>
            <AddButton aria-label="Add sheet">
              <svg width="18" height="20" viewBox="0 0 18 20" fill="none" aria-hidden="true">
                <path d="M.5 1h10l4 4v15H.5z" fill="#fff" stroke="#c9c9c9" />
                <circle cx="13.500" cy="9.500" r="2.600" stroke="#1f5fae" strokeWidth="1.300" />
                <path d="M13.500 6v7M10 9.500h7" stroke="#1f5fae" />
              </svg>
            </AddButton>
            <Tab $w={108} $active>Rapprochement</Tab>
            <Tab $w={81}>Paramètres</Tab>
            <Tab $w={107}>Tableau de bord</Tab>
            <Tab $w={87}>Instructions</Tab>
          </TabBar>
        </Main>
        <SideBar>
          <SideButton aria-label="Sidebar settings"><Svg>{icons.menu}</Svg></SideButton>
          <SideButton aria-label="Properties"><Svg>{icons.props}</Svg></SideButton>
          <SideButton aria-label="Styles"><Svg>{icons.styles}</Svg></SideButton>
          <SideButton aria-label="Gallery"><Svg>{icons.gallery}</Svg></SideButton>
          <SideButton aria-label="Navigator"><Svg>{icons.nav}</Svg></SideButton>
          <SideButton aria-label="Functions"><Svg>{icons.fx}</Svg></SideButton>
          <SideHandle aria-label="Hide sidebar">
            <svg width="6" height="8" viewBox="0 0 6 8" aria-hidden="true"><path d="M1 1l4 3-4 3z" fill="#fff" /></svg>
          </SideHandle>
        </SideBar>
      </Body>
      <StatusBar>
        <StatusField $w={28}>
          <svg width="15" height="15" viewBox="0 0 15 15" fill="none" stroke="#8a8a8a" aria-hidden="true"><path d="M.5.5h14v14h-12l-2-2zM3.500.500v5h8v-5M4.500 14.500v-5h6v5M6.500 11v3" /></svg>
        </StatusField>
        <StatusField $grow={198}>Sheet 1 of 4</StatusField>
        <StatusField $grow={283}>Selected: 1 row, 17 columns</StatusField>
        <StatusField $grow={277}>PageStyle_Rapprochement</StatusField>
        <StatusField $grow={220} $center>English (USA)</StatusField>
        <StatusField $w={61} />
        <StatusField $w={41}>
          <svg width="24" height="16" viewBox="0 0 24 16" fill="none" aria-hidden="true">
            <rect x=".8" y="3.500" width="14.500" height="9" stroke="#6aaede" strokeWidth="1.400" fill="#fff" />
            <path d="M19 .7h5.500M19 15.300h5.500M21.800 1v14" stroke="#555" strokeWidth="1.200" />
          </svg>
        </StatusField>
        <StatusField $w={26} />
        <StatusField $w={27} />
        <StatusField $grow={240} $center>Average: ; Sum: 0</StatusField>
        <StatusField $w={127}>
          <ZoomButton aria-label="Zoom out"><svg width="9" height="10" viewBox="0 0 9 10" aria-hidden="true"><path d="M0 5h9" stroke="#333" strokeWidth="2" /></svg></ZoomButton>
          <ZoomRange type="range" aria-label="Zoom" min="0" max="100" defaultValue="26" />
          <ZoomButton aria-label="Zoom in"><svg width="9" height="10" viewBox="0 0 9 10" aria-hidden="true"><path d="M0 5h9M4.500 0v10" stroke="#333" strokeWidth="2" /></svg></ZoomButton>
        </StatusField>
        <StatusField $w={43}>65%</StatusField>
      </StatusBar>
    </Shell>
  );
}
